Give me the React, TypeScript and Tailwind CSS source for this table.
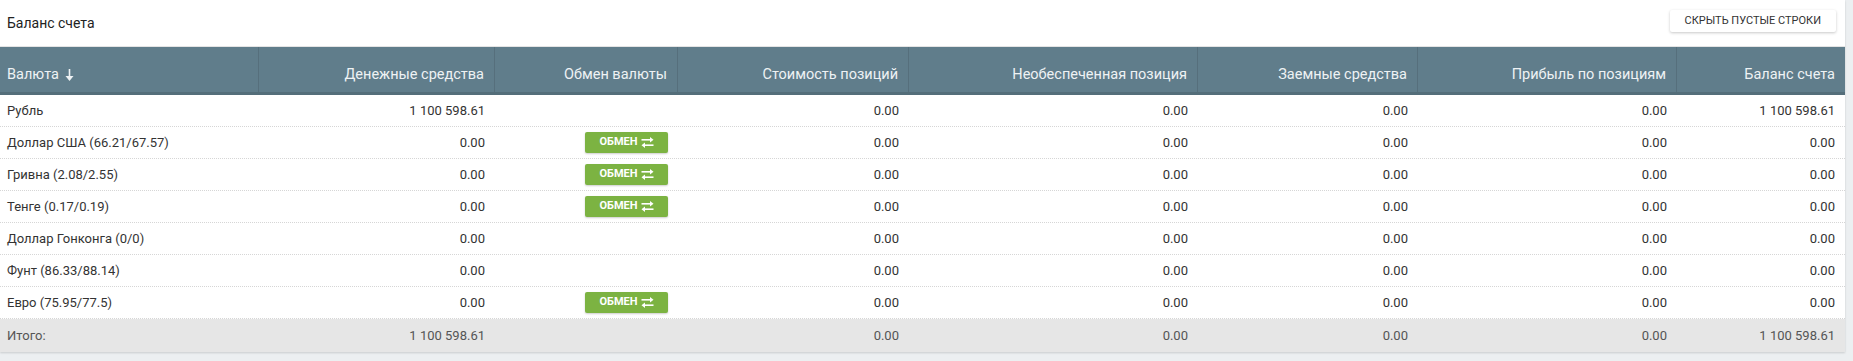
const cols = "grid grid-cols-[259px_236px_183px_231px_289px_220px_259px_168px]";

const headers = [
  "Денежные средства",
  "Обмен валюты",
  "Стоимость позиций",
  "Необеспеченная позиция",
  "Заемные средства",
  "Прибыль по позициям",
  "Баланс счета",
];

interface Row {
  name: string;
  cash: string;
  exchange: boolean;
  total: string;
}

const rows: Row[] = [
  { name: "Рубль", cash: "1 100 598.61", exchange: false, total: "1 100 598.61" },
  { name: "Доллар США (66.21/67.57)", cash: "0.00", exchange: true, total: "0.00" },
  { name: "Гривна (2.08/2.55)", cash: "0.00", exchange: true, total: "0.00" },
  { name: "Тенге (0.17/0.19)", cash: "0.00", exchange: true, total: "0.00" },
  { name: "Доллар Гонконга (0/0)", cash: "0.00", exchange: false, total: "0.00" },
  { name: "Фунт (86.33/88.14)", cash: "0.00", exchange: false, total: "0.00" },
  { name: "Евро (75.95/77.5)", cash: "0.00", exchange: true, total: "0.00" },
];

const SwapIcon = () => (
  <svg width="13" height="11" viewBox="0 0 13 11" fill="currentColor">
    <rect x="0.5" y="2" width="9" height="1.6" />
    <polygon points="9,0 12.5,2.8 9,5.6" />
    <rect x="3.5" y="7.4" width="9" height="1.6" />
    <polygon points="4,5.4 0.5,8.2 4,11" />
  </svg>
);

const ExchangeButton = () => (
  <button className="flex h-[21px] w-[83px] items-center justify-center gap-[3px] rounded-[2px] bg-[#7cb342] text-[11px] font-bold text-white shadow-[0_1px_2px_rgba(0,0,0,0.2)]">
    ОБМЕН
    <SwapIcon />
  </button>
);

const Cell = ({ children }: { children?: React.ReactNode }) => (
  <div className="flex items-center justify-end pr-[10px]">{children}</div>
);

export default function App() {
  return (
    <div
      className="flex h-[361px] w-[1853px] bg-[#eceff1] text-[13px] text-[#333]"
      style={{ fontFamily: "Roboto, 'Liberation Sans', sans-serif" }}
    >
      <div className="flex h-[352px] w-[1845px] flex-col bg-white shadow-[0_1px_2px_rgba(0,0,0,0.15)]">
        <div className="flex h-[47px] items-center justify-between border-b border-[#e4e4e4] pl-[7px] pr-[9px]">
          <div className="text-[14px] text-[#222]">Баланс счета</div>
          <button className="mb-[4px] h-[22px] rounded-[2px] bg-white px-[15px] text-[11px] text-[#333] shadow-[0_1px_3px_rgba(0,0,0,0.22)]">
            СКРЫТЬ ПУСТЫЕ СТРОКИ
          </button>
        </div>

        <div className={`${cols} h-[48px] border-b-[3px] border-[#546e7a] bg-[#607d8b] text-[14.5px] text-[#eef2f4]`}>
          <div className="flex items-end border-r border-[#566f7c] pb-[6px] pl-[7px]">
            <span className="flex items-center gap-[6px]">
              Валюта
              <svg width="9" height="12" viewBox="0 0 9 12" fill="currentColor">
                <rect x="3.7" y="0" width="1.6" height="9" />
                <polygon points="0.5,7 8.5,7 4.5,12" />
              </svg>
            </span>
          </div>
          {headers.map((h, i) => (
            <div
              key={h}
              className={`flex items-end justify-end pb-[6px] pr-[10px] ${i < headers.length - 1 ? "border-r border-[#566f7c]" : ""}`}
            >
              {h}
            </div>
          ))}
        </div>

        {rows.map((r) => (
          <div key={r.name} className={`${cols} h-[32px] border-b border-dotted border-[#d6d6d6]`}>
            <div className="flex items-center pl-[7px]">{r.name}</div>
            <Cell>{r.cash}</Cell>
            <Cell>{r.exchange && <ExchangeButton />}</Cell>
            <Cell>0.00</Cell>
            <Cell>0.00</Cell>
            <Cell>0.00</Cell>
            <Cell>0.00</Cell>
            <Cell>{r.total}</Cell>
          </div>
        ))}

        <div className={`${cols} flex-1 bg-[#e6e6e6] text-[#555]`}>
          <div className="flex items-center pl-[7px]">Итого:</div>
          <Cell>1 100 598.61</Cell>
          <Cell />
          <Cell>0.00</Cell>
          <Cell>0.00</Cell>
          <Cell>0.00</Cell>
          <Cell>0.00</Cell>
          <Cell>1 100 598.61</Cell>
        </div>
      </div>
    </div>
  );
}
